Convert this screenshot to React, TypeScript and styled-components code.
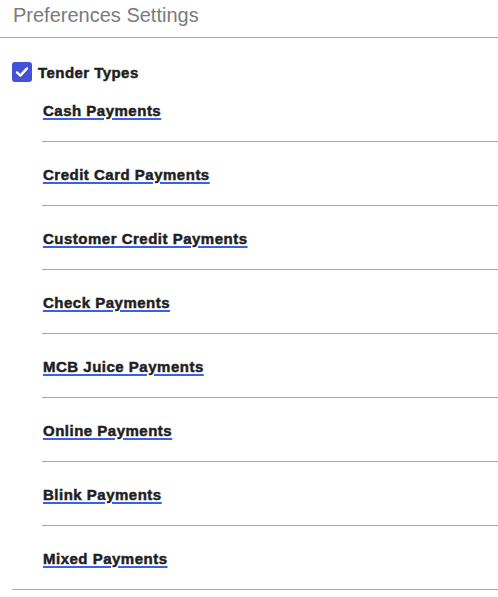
import React from "react";
import styled, { createGlobalStyle } from "styled-components";

const Global = createGlobalStyle`
  html, body { margin: 0; padding: 0; background: #ffffff; }
  body { font-family: "Liberation Sans", Arial, sans-serif; }
`;

const Page = styled.div`
  width: 498px;
  background: #fff;
`;

const Header = styled.div`
  padding: 3px 13px 10px;
  line-height: 24px;
  font-size: 20px;
  color: #7b7b7b;
  border-bottom: 1px solid #a9a9a9;
`;

const Section = styled.div`
  padding: 24px 0 0 12px;
`;

const SectionInner = styled.div`
  border-bottom: 1px solid #a9a9a9;
`;

const CheckRow = styled.label`
  display: flex;
  align-items: center;
  gap: 6px;
  height: 20px;
  font-size: 15px;
  font-weight: 700;
  letter-spacing: 0.45px;
  color: #1f1f1f;
  -webkit-text-stroke: 0.5px #1f1f1f;
`;

const Box = styled.span`
  width: 20px;
  height: 20px;
  border-radius: 3px;
  background: #4351d6;
  display: flex;
  align-items: center;
  justify-content: center;
`;

const List = styled.ul`
  list-style: none;
  margin: 0;
  padding: 0 0 0 30px;
`;

const Item = styled.li<{ $last?: boolean }>`
  padding: 24px 0 21px 1px;
  line-height: 18px;
  border-bottom: ${(p) => (p.$last ? "none" : "1px solid #a9a9a9")};
  &:first-child { padding-top: 20px; }
`;

const Link = styled.a`
  font-size: 15px;
  font-weight: 700;
  letter-spacing: 0.5px;
  color: #1f1f1f;
  -webkit-text-stroke: 0.5px #1f1f1f;
  text-decoration: underline;
  text-decoration-color: #3c5fe8;
  text-decoration-thickness: 2px;
  text-underline-offset: 2px;
  cursor: pointer;
`;

const items = [
  "Cash Payments",
  "Credit Card Payments",
  "Customer Credit Payments",
  "Check Payments",
  "MCB Juice Payments",
  "Online Payments",
  "Blink Payments",
  "Mixed Payments",
];

export default function App() {
  return (
    <Page>
      <Global />
      <Header>Preferences Settings</Header>
      <Section>
        <SectionInner>
          <CheckRow>
            <Box>
              <svg width="16" height="16" viewBox="0 0 16 16">
                <path d="M3 8.4 L6.4 11.6 L13 4.4" fill="none" stroke="#fff" strokeWidth="2.4" strokeLinecap="round" strokeLinejoin="round" />
              </svg>
            </Box>
            Tender Types
          </CheckRow>
          <List>
            {items.map((t, i) => (
              <Item key={t} $last={i === items.length - 1}>
                <Link>{t}</Link>
              </Item>
            ))}
          </List>
        </SectionInner>
      </Section>
    </Page>
  );
}
